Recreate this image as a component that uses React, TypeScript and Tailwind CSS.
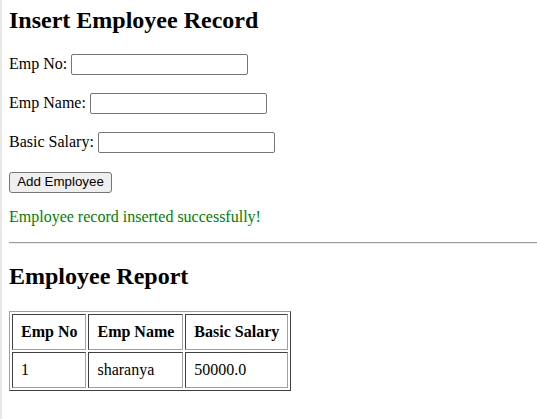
import React from "react";

export default function App() {
  const rows = [
    { label: "Emp No:" },
    { label: "Emp Name:" },
    { label: "Basic Salary:" },
  ];
  return (
    <div className="min-h-[419px] w-[537px] overflow-hidden bg-white border-l-2 border-[#e8e8e8] pl-[7px] pt-[7px] font-['Liberation_Serif','Times_New_Roman',serif] text-[16px] text-black">
      <h2 className="text-[24px] font-bold leading-[27.6px]">Insert Employee Record</h2>
      <div className="mt-[19px] flex flex-col gap-[18px]">
        {rows.map((r) => (
          <div key={r.label} className="flex h-[21px] items-center leading-[18px]">
            <span>{r.label}</span>
            <span className="w-[4px]" />
            <input
              type="text"
              className="h-[21px] w-[177px] rounded-[2px] border border-[#767676] bg-white px-[2px] font-['Liberation_Sans',Arial,sans-serif] text-[13.33px] outline-none"
            />
          </div>
        ))}
      </div>
      <div className="mt-[19px] flex">
        <button className="flex h-[21px] w-[103px] items-center justify-center rounded-[3px] border border-[#767676] bg-[#efefef] px-[6px] font-['Liberation_Sans',Arial,sans-serif] text-[13.33px] leading-[16px] text-black">
          Add Employee
        </button>
      </div>
      <div className="mt-[15px] leading-[18px] text-[#008000]">Employee record inserted successfully!</div>
      <div className="mt-[16px] h-[2px] border-t border-b border-t-[#9a9a9a] border-b-[#eeeeee]" />
      <h2 className="mt-[19px] text-[24px] font-bold leading-[27.6px]">Employee Report</h2>
      <table className="mt-[21px] border-separate border-spacing-[2px] border border-t-[#a0a0a0] border-l-[#a0a0a0] border-r-[#404040] border-b-[#404040]">
        <thead>
          <tr>
            {["Emp No", "Emp Name", "Basic Salary"].map((h) => (
              <th
                key={h}
                className="border border-t-[#404040] border-l-[#404040] border-r-[#a0a0a0] border-b-[#a0a0a0] p-[8px] text-center font-bold leading-[18px]"
              >
                {h}
              </th>
            ))}
          </tr>
        </thead>
        <tbody>
          <tr>
            {["1", "sharanya", "50000.0"].map((d) => (
              <td
                key={d}
                className="border border-t-[#404040] border-l-[#404040] border-r-[#a0a0a0] border-b-[#a0a0a0] p-[8px] text-left leading-[18px]"
              >
                {d}
              </td>
            ))}
          </tr>
        </tbody>
      </table>
    </div>
  );
}
